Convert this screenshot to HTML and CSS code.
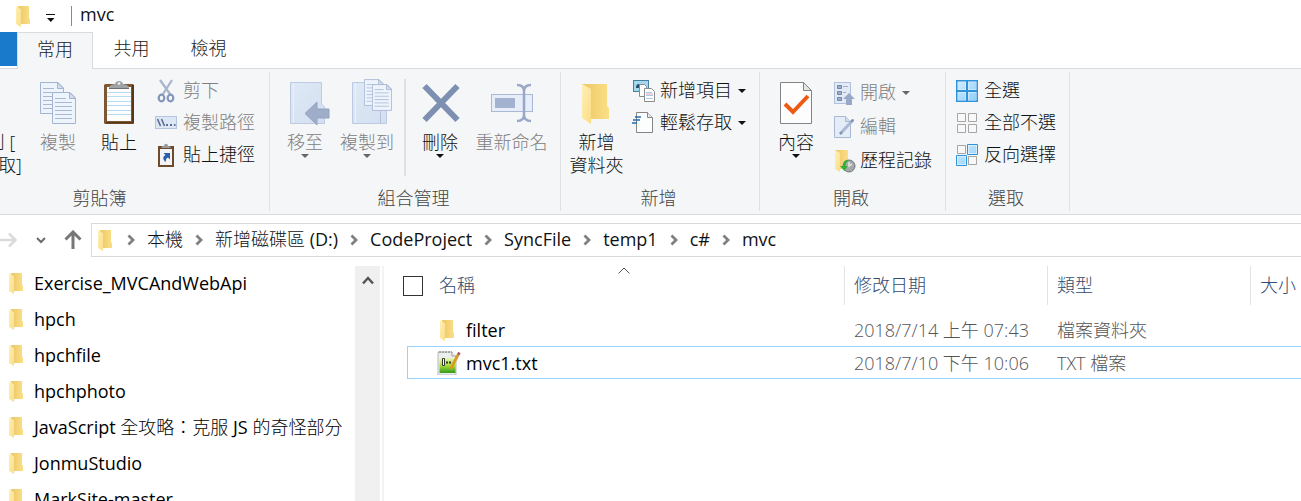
FILE: index.html
```html
<!DOCTYPE html>
<html lang="zh-Hant">
<head>
<meta charset="utf-8">
<title>mvc</title>
<link rel="stylesheet" href="styles.css">
</head>
<body>
<svg class="defs" aria-hidden="true">
  <defs>
    <linearGradient id="gBack" x1="0" y1="0" x2="1" y2="0"><stop offset="0" stop-color="#ecc766"/><stop offset="1" stop-color="#fbdf85"/></linearGradient>
    <linearGradient id="gFront" x1="0" y1="0" x2="1" y2="1"><stop offset="0" stop-color="#fff0b8"/><stop offset="1" stop-color="#fbdc83"/></linearGradient>
    <linearGradient id="gBlue" x1="0" y1="0" x2="1" y2="1"><stop offset="0" stop-color="#dfe9f6"/><stop offset="1" stop-color="#d3dff0"/></linearGradient>
    <linearGradient id="gSel" x1="0" y1="0" x2="1" y2="1"><stop offset="0" stop-color="#d2ebfb"/><stop offset="1" stop-color="#8fd0fa"/></linearGradient>
    <linearGradient id="gGreen" x1="0" y1="0" x2="0" y2="1"><stop offset="0" stop-color="#e8f7b8"/><stop offset=".5" stop-color="#a8dc3c"/><stop offset="1" stop-color="#2f9a1c"/></linearGradient>
  </defs>
  <symbol id="folder" viewBox="0 0 14 21">
    <path d="M2 0h11v12l1 1v5H4z" fill="url(#gBack)"/>
    <path d="M0 0l5 3.500V21l-5-3z" fill="url(#gFront)"/>
  </symbol>
  <symbol id="page" viewBox="0 0 24 32">
    <path d="M.5.5h17.500l5.500 5.500v25.500H.5z" fill="#eef4fc" stroke="#a3b4d0"/>
    <path d="M17.500.5v6h6z" fill="#d3dfef" stroke="#a3b4d0"/>
    <path d="M3 6.500h11M3 10.500h17M3 14.500h17M3 18.500h17M3 22.500h17M3 26.500h17" stroke="#a9b9d4" fill="none"/>
  </symbol>
  <symbol id="chev" viewBox="0 0 8 12"><path d="M1.500 1.500L6 6l-4.500 4.500" fill="none" stroke="#808080" stroke-width="2.800"/></symbol>
  <symbol id="tri" viewBox="0 0 8 4"><path d="M0 0h8L4 4z" fill="currentColor"/></symbol>
</svg>

<header class="titlebar">
  <svg class="folder"><use href="#folder"/></svg>
  <button class="quick" aria-label="自訂快速存取工具列">
    <svg width="10" height="8" viewBox="0 0 10 8"><path d="M0 0h9v1H0zM1 4h7.500L4.800 8z" fill="#111"/></svg>
  </button>
  <h1 class="title">mvc</h1>
</header>

<nav class="tabs">
  <button class="file-tab" aria-label="檔案"></button>
  <button class="tab active">常用</button>
  <button class="tab">共用</button>
  <button class="tab">檢視</button>
</nav>

<section class="ribbon">
  <div class="group clipboard">
    <div class="tools">
      <button class="big pin"><span class="icon"></span><span>釘選到 [<br>快速存取]</span></button>
      <button class="big copy" disabled>
        <svg class="icon" viewBox="0 0 48 48"><use href="#page" x="6" y="3" width="24" height="32"/><use href="#page" x="18" y="13" width="24" height="32"/></svg>
        <span>複製</span></button>
      <button class="big paste">
        <svg class="icon" viewBox="0 0 48 48">
          <rect x="9" y="5" width="30" height="40" rx="1.500" fill="#7d5734"/><path d="M37 6h2v38.500H11V43h26z" fill="#593718"/>
          <path d="M12 8h24v34H12z" fill="#fdfdfd"/>
          <path d="M12 13.500h24M12 17.500h24M12 22.500h24M12 26.500h24M12 31.500h24M12 35.500h24" stroke="#b5dcf0"/>
          <path d="M14 9c0-2.500 2-3 6-4 .500-4 7.500-4 8 0 4 1 6 1.500 6 4z" fill="#a0a3a5"/><path d="M14 9.500h20" stroke="#6c6e70"/><circle cx="24" cy="4.500" r="1.300" fill="#eee"/>
        </svg>
        <span>貼上</span></button>
      <div class="stack">
        <button class="small" disabled>
          <svg class="sicon" viewBox="0 0 24 24"><path d="M5 1l10 14M17 1L8 15" stroke="#a8b6cd" stroke-width="2.300" fill="none"/><ellipse cx="6.500" cy="19" rx="2.800" ry="3.300" fill="none" stroke="#8296bb" stroke-width="2.200"/><ellipse cx="15.500" cy="19" rx="2.800" ry="3.300" fill="none" stroke="#8296bb" stroke-width="2.200"/></svg>
          <span>剪下</span></button>
        <button class="small" disabled>
          <svg class="sicon" viewBox="0 0 24 24"><rect x=".5" y="5.500" width="21" height="12" fill="#dce6f4" stroke="#b6c6df"/><path d="M2.500 8l3 7M6.500 8l3 7" stroke="#5d6f92" stroke-width="1.600"/><path d="M11 14h2M15 14h2M19 14h1.500" stroke="#5d6f92" stroke-width="2"/></svg>
          <span>複製路徑</span></button>
        <button class="small">
          <svg class="sicon" viewBox="0 0 24 24"><path d="M3 3h16v21H3z" fill="#6f4a2b"/><path d="M5 6h12v16H5z" fill="#f3f4f6"/><path d="M6 5c1-2 2-2 3-2 0-3 4-3 4 0 1 0 2 0 3 2z" fill="#999c9e"/><path d="M8.500 10h6.500v6.500L13 14.500c-2 1-2.500 2.500-2 4.500-3.500-2-3.500-5.500-.500-7z" fill="#2b5fae"/></svg>
          <span>貼上捷徑</span></button>
      </div>
    </div>
    <h2>剪貼簿</h2>
  </div>

  <div class="group organize">
    <div class="tools">
      <button class="big move" disabled>
        <svg class="icon" viewBox="0 0 48 48"><path d="M9.500 3.500h31V25l3 3v16.500h-34z" fill="url(#gBlue)" stroke="#bccbe2"/><path d="M12.500 4v40" stroke="#eaf1fa"/><path d="M24 34.500L36 23v7h12v9H36v7z" fill="#9fadc8" stroke="#91a2c2"/></svg>
        <span>移至</span><svg class="tri"><use href="#tri"/></svg></button>
      <button class="big copyto" disabled>
        <svg class="icon" viewBox="0 0 48 48"><path d="M9.500 3.500h27V30h7v14.500h-34z" fill="url(#gBlue)" stroke="#bccbe2"/><path d="M12.500 4v40" stroke="#eaf1fa"/><path d="M37.500 32v12" stroke="#b3c3de"/><use href="#page" x="21" y="0" width="20" height="27"/><use href="#page" x="29" y="5" width="20" height="27"/></svg>
        <span>複製到</span><svg class="tri"><use href="#tri"/></svg></button>
      <div class="divider"></div>
      <button class="big delete">
        <svg class="icon" viewBox="0 0 48 48"><path d="M8.500 7L41.500 41M41.500 7L8.500 41" stroke="#7e90b1" stroke-width="6" fill="none"/></svg>
        <span>刪除</span><svg class="tri"><use href="#tri"/></svg></button>
      <button class="big rename" disabled>
        <svg class="icon" viewBox="0 0 48 48"><rect x="3.500" y="15.500" width="41" height="17" fill="#e7eefa" stroke="#a9b8d4"/><path d="M7 19h20v10H7z" fill="#a3b2cf"/><path d="M29 6c5 0 7 2 7 6 0-4 2-6 7-6M36 10v28M29 42c5 0 7-2 7-6 0 4 2 6 7 6" stroke="#98a8c6" stroke-width="2.500" fill="none"/></svg>
        <span>重新命名</span></button>
    </div>
    <h2>組合管理</h2>
  </div>

  <div class="group new">
    <div class="tools">
      <button class="big newfolder">
        <svg class="icon" viewBox="0 0 48 48"><path d="M9 5h25v22l2 2v11H14z" fill="url(#gBack)"/><path d="M9 5l9 5v35l-9-6z" fill="url(#gFront)"/></svg>
        <span>新增<br>資料夾</span></button>
      <div class="stack">
        <button class="small">
          <svg class="sicon" viewBox="0 0 24 24"><rect x="1.500" y="1.500" width="15" height="11" fill="#a4d8ef" stroke="#467f9d"/><path d="M4 9c0-3 1-4 3-4s3 2 3 4z" fill="#27506a"/><path d="M7.500 5.500h5l2 2v10h-7z" fill="#fff" stroke="#8b8b8b"/><path d="M12.500 9.500h7l3 3v10h-10z" fill="#fff" stroke="#8b8b8b"/><path d="M14 13.500h6M14 16.500h7M14 19.500h7" stroke="#a7cbed"/><path d="M14 15h7" stroke="#e0a5b0"/></svg>
          <span>新增項目</span><svg class="tri"><use href="#tri"/></svg></button>
        <button class="small">
          <svg class="sicon" viewBox="0 0 24 24"><path d="M4.500 1.500h11l5 5v15h-16z" fill="#fcfdfd" stroke="#858585"/><path d="M15.500 1.500v5h5" fill="#e8e8e8" stroke="#858585"/><path d="M3 6h6M1 9h7M0 12h5" stroke="#246caf" stroke-width="1.500"/></svg>
          <span>輕鬆存取</span><svg class="tri"><use href="#tri"/></svg></button>
      </div>
    </div>
    <h2>新增</h2>
  </div>

  <div class="group open">
    <div class="tools">
      <button class="big props">
        <svg class="icon" viewBox="0 0 48 48"><path d="M8.500 3.500h23l8 8v33h-31z" fill="#fdfdfd" stroke="#848484"/><path d="M31.500 3.500v8h8z" fill="#e5e5e5" stroke="#848484"/><path d="M13 25l8 8 15-16" fill="none" stroke="#ef5a13" stroke-width="4"/></svg>
        <span>內容</span><svg class="tri"><use href="#tri"/></svg></button>
      <div class="stack tall">
        <button class="small" disabled>
          <svg class="sicon" viewBox="0 0 24 24"><rect x="2.500" y="1.500" width="16" height="21" fill="#e2eaf6" stroke="#b2c1dc"/><path d="M5.500 4.500h4v3h-4zM5.500 10.500h4v3h-4zM5.500 16.500h4v3h-4z" fill="#9db0d0" stroke="#7186ad"/><path d="M11 5.500h5M11 11.500h3" stroke="#9fb0cd"/><path d="M17 12l6 6h-3v6h-6v-6h-3z" fill="#98a9c8"/></svg>
          <span>開啟</span><svg class="tri"><use href="#tri"/></svg></button>
        <button class="small" disabled>
          <svg class="sicon" viewBox="0 0 24 24"><path d="M2.500 1.500h11l5 5v16h-16z" fill="#e4ecf8" stroke="#a9b8d3"/><path d="M13.500 1.500v5h5" fill="#d0dbed" stroke="#a9b8d3"/><path d="M8 19L21 5" stroke="#a9b9d6" stroke-width="3"/><path d="M8 19l2-2M19 7l2.500-2.500" stroke="#7e92b5" stroke-width="2"/></svg>
          <span>編輯</span></button>
        <button class="small">
          <svg class="sicon" viewBox="0 0 24 24"><path d="M3 1h13v19H6z" fill="url(#gBack)"/><path d="M3 1l5 3v19l-5-3z" fill="url(#gFront)"/><circle cx="17" cy="17" r="6" fill="#a4a9ab" stroke="#737779"/><path d="M17 13v4l3-2" stroke="#eee" fill="none" stroke-width="1.300"/><path d="M16 11c-4 0-5 3-5 6H8l4.500 5 3-5h-2c0-3 1-4 3-5z" fill="#2eb135"/></svg>
          <span>歷程記錄</span></button>
      </div>
    </div>
    <h2>開啟</h2>
  </div>

  <div class="group select">
    <div class="tools">
      <div class="stack">
        <button class="small">
          <svg class="sicon" viewBox="0 0 24 24"><path d="M0 1h22v22H0z" fill="#2f93dc"/><path d="M1.500 2.500h8.500v8.500H1.500zM12 2.500h8.500v8.500H12zM1.500 13h8.500v8.500H1.500zM12 13h8.500v8.500H12z" fill="#e9f6fe"/><path d="M2 3h7.500v7.500H2zM12.500 3h7.500v7.500H12.500zM2 13.500h7.500v7.500H2zM12.500 13.500h7.500v7.500H12.500z" fill="url(#gSel)"/></svg>
          <span>全選</span></button>
        <button class="small">
          <svg class="sicon" viewBox="0 0 24 24"><path d="M1.500 2.500h8v8h-8zM12.500 2.500h8v8h-8zM1.500 13.500h8v8h-8zM12.500 13.500h8v8h-8z" fill="#f8f8f8" stroke="#a6a6a6"/></svg>
          <span>全部不選</span></button>
        <button class="small">
          <svg class="sicon" viewBox="0 0 24 24"><path d="M1.500 2.500h8v8h-8zM12.500 13.500h8v8h-8z" fill="#f8f8f8" stroke="#a6a6a6"/><path d="M11.500 1.500h10v10h-10zM.5 12.500h10v10H.5z" fill="#fff" stroke="#2f93dc"/><path d="M12.500 2.500h8v8h-8zM1.500 13.500h8v8h-8z" fill="url(#gSel)"/></svg>
          <span>反向選擇</span></button>
      </div>
    </div>
    <h2>選取</h2>
  </div>
</section>

<nav class="address">
  <div class="history">
    <button aria-label="下一頁"><svg width="18" height="18" viewBox="0 0 18 18"><path d="M0 9h15M9 2.500l6.500 6.500L9 15.500" fill="none" stroke="#dadada" stroke-width="2.500"/></svg></button>
    <button aria-label="最近的位置"><svg width="10" height="7" viewBox="0 0 10 7"><path d="M1 1l4 4 4-4" fill="none" stroke="#6b6b6b" stroke-width="2"/></svg></button>
    <button aria-label="上移"><svg width="18" height="20" viewBox="0 0 18 20"><path d="M9 19V3M1.500 9.500L9 2l7.500 7.500" fill="none" stroke="#777" stroke-width="3"/></svg></button>
  </div>
  <div class="path">
    <svg class="folder"><use href="#folder"/></svg>
    <svg class="chev"><use href="#chev"/></svg><button>本機</button>
    <svg class="chev"><use href="#chev"/></svg><button>新增磁碟區 (D:)</button>
    <svg class="chev"><use href="#chev"/></svg><button>CodeProject</button>
    <svg class="chev"><use href="#chev"/></svg><button>SyncFile</button>
    <svg class="chev"><use href="#chev"/></svg><button>temp1</button>
    <svg class="chev"><use href="#chev"/></svg><button>c#</button>
    <svg class="chev"><use href="#chev"/></svg><button>mvc</button>
  </div>
</nav>

<main class="content">
  <nav class="tree">
    <a href="#"><svg class="folder"><use href="#folder"/></svg>Exercise_MVCAndWebApi</a>
    <a href="#"><svg class="folder"><use href="#folder"/></svg>hpch</a>
    <a href="#"><svg class="folder"><use href="#folder"/></svg>hpchfile</a>
    <a href="#"><svg class="folder"><use href="#folder"/></svg>hpchphoto</a>
    <a href="#"><svg class="folder"><use href="#folder"/></svg>JavaScript 全攻略：克服 JS 的奇怪部分</a>
    <a href="#"><svg class="folder"><use href="#folder"/></svg>JonmuStudio</a>
    <a href="#"><svg class="folder"><use href="#folder"/></svg>MarkSite-master</a>
  </nav>
  <div class="scroll">
    <button aria-label="向上捲動"><svg width="12" height="9" viewBox="0 0 12 9"><path d="M1 7.500L6 2l5 5.500" fill="none" stroke="#555" stroke-width="2.500"/></svg></button>
  </div>
  <section class="files">
    <table>
      <colgroup><col class="c-name"><col class="c-date"><col class="c-type"><col></colgroup>
      <thead>
        <tr>
          <th><div class="namehead"><input type="checkbox" aria-label="全部選取"><span>名稱</span><svg class="sort" viewBox="0 0 12 7"><path d="M.5 6.500L6 1l5.500 5.500" fill="none" stroke="#555"/></svg></div></th>
          <th>修改日期</th><th>類型</th><th>大小</th>
        </tr>
      </thead>
      <tbody>
        <tr>
          <td><div class="file"><svg class="folder"><use href="#folder"/></svg>filter</div></td>
          <td>2018/7/14 上午 07:43</td><td>檔案資料夾</td><td></td>
        </tr>
        <tr class="focused">
          <td><div class="file">
            <svg class="doc" viewBox="0 0 24 24"><path d="M1 1h14l4 4v19H1z" fill="#eceeee" stroke="#b5b9bb"/><path d="M2.500 7h16v15h-16z" fill="url(#gGreen)"/><path d="M2 1h13" stroke="#777" stroke-dasharray="2 1"/><path d="M15 1v4h4" fill="#fff" stroke="#999"/><path d="M5.500 7.500h2v7h-2z" fill="#fff" stroke="#333"/><path d="M9 11.500h2M12 11.500h2" stroke="#333" stroke-width="2"/><path d="M13.500 18L21 4" stroke="#d99b20" stroke-width="2.800"/><path d="M21 4l1.500-2.500" stroke="#a45a68" stroke-width="2.800"/></svg>mvc1.txt</div></td>
          <td>2018/7/10 下午 10:06</td><td>TXT 檔案</td><td></td>
        </tr>
      </tbody>
    </table>
  </section>
</main>
</body>
</html>
```
FILE: styles.css
```css
* { box-sizing: border-box; }
body {
  margin: 0;
  height: 100vh;
  display: flex;
  flex-direction: column;
  overflow: hidden;
  background: #fff;
  color: #111;
  font: 300 18px/24px "Open Sans", "Noto Sans CJK TC Light", "Noto Sans CJK TC", sans-serif;
}
button {
  border: 0;
  padding: 0;
  background: none;
  font: inherit;
  color: inherit;
  white-space: nowrap;
}
svg { display: block; flex: none; }
h1, h2 { margin: 0; font: inherit; }
.defs { position: absolute; width: 0; height: 0; }
.folder { width: 14px; height: 21px; }
.tri { width: 8px; height: 4px; }

.titlebar { display: flex; align-items: center; height: 32px; flex: none; padding-left: 16px; }
.quick { margin-left: 16px; padding-top: 4px; }
.title { margin-left: 15px; padding: 0 0 3px 8px; border-left: 1px solid #8a8a8a; line-height: 17px; font-weight: 400; }

.tabs { display: flex; height: 37px; flex: none; border-bottom: 1px solid #dadbdc; color: #222; }
.file-tab { width: 17px; height: 34px; background: #1979ca; }
.tab { width: 77px; padding-bottom: 4px; }
.tab.active {
  width: 76px;
  height: 37px;
  background: #f5f6f7;
  border: 1px solid #dadbdc;
  border-bottom: 0;
}

.ribbon { display: flex; flex: none; background: #f5f6f7; border-bottom: 1px solid #dadbdc; padding: 3px 0; color: #111; overflow: hidden; }
.group { display: flex; flex-direction: column; flex: none; border-right: 1px solid #dfe0e2; height: 139px; }
.group h2 { margin-top: auto; padding: 0 3px 1px 0; text-align: center; color: #444; }
.tools { display: flex; align-items: flex-start; }
.clipboard { width: 337px; margin-left: -67px; }
.organize { width: 291px; }
.new { width: 199px; }
.open { width: 186px; }
.select { width: 124px; }
.big { display: flex; flex-direction: column; align-items: center; padding-top: 7px; line-height: 23px; }
.big .icon { width: 48px; height: 48px; margin-bottom: 4px; overflow: visible; }
button:disabled { color: #808080; }
button:disabled .tri { color: #666; }
.pin { width: 100px; }
.copy { width: 50px; }
.paste { width: 72px; }
.move { width: 70px; }
.copyto { width: 54px; }
.delete { width: 68px; }
.rename { width: 75px; }
.newfolder { width: 71px; }
.props { width: 72px; }
.divider { width: 2px; height: 97px; margin: 7px 0 0 10px; background: #dfe0e2; }
.stack { display: flex; flex-direction: column; padding-top: 3px; }
.tall { padding-top: 4px; }
.select .stack { padding-left: 10px; }
.small { display: flex; align-items: center; height: 32px; }
.small span { padding-bottom: 2px; }
.tall .small { height: 34px; }
.sicon { width: 24px; height: 24px; margin-right: 4px; }
.small .tri { margin-left: 6px; color: #111; }

.address { display: flex; flex: none; height: 51px; align-items: flex-start; padding-top: 8px; }
.history { display: flex; align-items: center; width: 91px; height: 34px; }
.history button + button { margin-left: 18px; }
.path { flex: 1; display: flex; align-items: center; height: 34px; border: 1px solid #d9d9d9; border-right: 0; padding-left: 6px; font-weight: 400; }
.path button { padding-bottom: 2px; }
.chev { width: 8px; height: 12px; margin: 0 12px; }
.path .folder + .chev { margin-left: 15px; }

.content { flex: 1; display: flex; min-height: 0; overflow: hidden; }
.tree { width: 355px; flex: none; }
.tree a { display: flex; align-items: center; gap: 11px; height: 36px; padding: 0 0 2px 9px; color: #000; text-decoration: none; white-space: nowrap; font-weight: 400; }
.scroll { width: 25px; flex: none; background: #f0f0f0; text-align: center; }
.scroll button { padding: 10px 6px; }
.files { flex: 1; margin-left: 2px; border-left: 2px solid #f3f3f3; padding-left: 23px; min-width: 0; }
table { width: 100%; table-layout: fixed; border-collapse: separate; border-spacing: 0; }
.c-name { width: 437px; }
.c-date, .c-type { width: 203px; }
th, td { padding: 0 0 0 10px; text-align: left; font-weight: 300; white-space: nowrap; }
th { height: 39px; padding-left: 9px; padding-bottom: 2px; color: #34496e; border-left: 1px solid #e3e3e3; }
th:first-child { padding: 0; border: 0; }
.namehead { position: relative; display: flex; align-items: center; gap: 16px; height: 39px; margin-left: -4px; }
.namehead span { padding-bottom: 2px; }
.namehead input { appearance: none; width: 20px; height: 20px; margin: 0; border: 1px solid #333; background: #fff; }
.sort { position: absolute; top: 1px; left: calc(50% - 6px); width: 12px; height: 7px; }
tbody::before { content: ""; display: block; height: 9px; }
td { height: 32px; color: #555; }
td:first-child { padding-left: 0; }
.focused td { border: solid #99d1ff; border-width: 1px 0; height: 33px; }
.focused td:first-child { border-left-width: 1px; }
.file { display: flex; align-items: center; padding-left: 33px; color: #000; font-weight: 400; }
.focused .file { padding-left: 32px; }
.file .folder { margin-right: 12px; }
.doc { width: 24px; height: 24px; margin: 0 5px 0 -3px; }
```
